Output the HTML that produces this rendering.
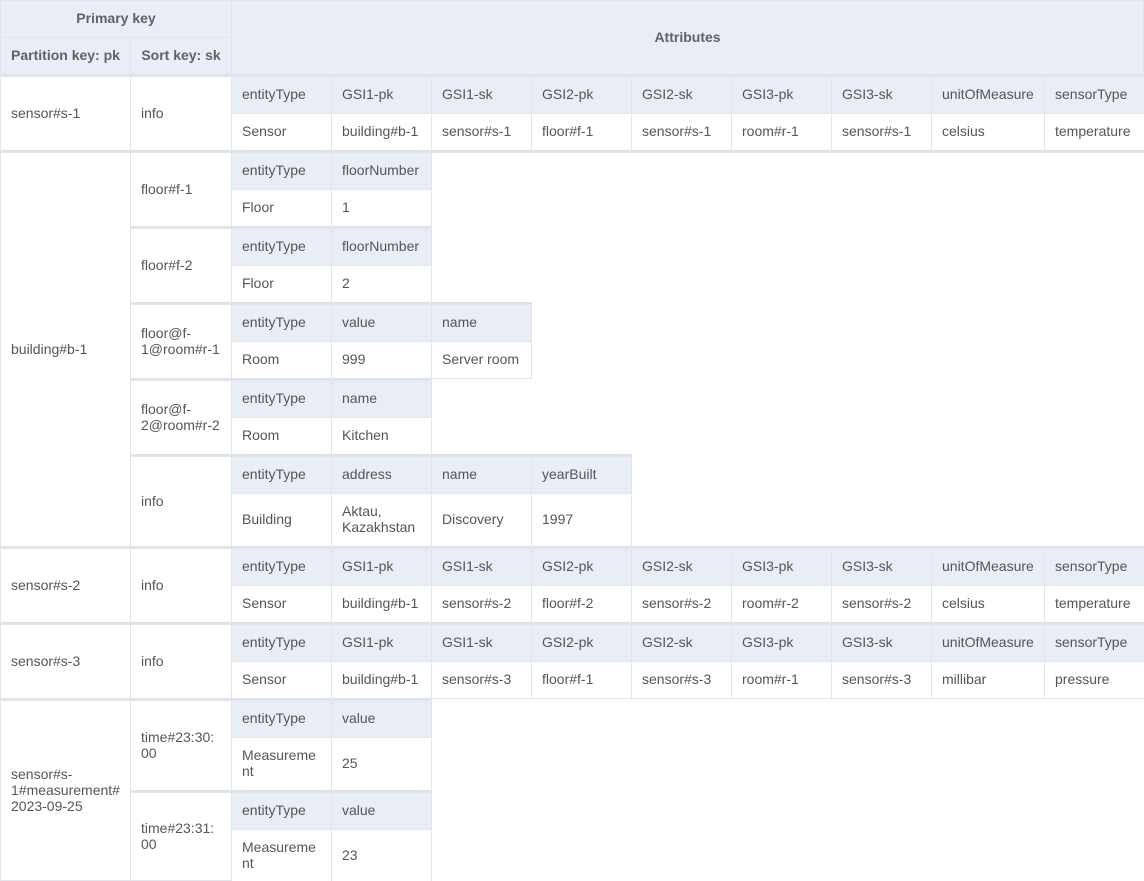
<!DOCTYPE html>
<html><head><meta charset="utf-8"><style>
html,body{margin:0;padding:0;background:#fff;width:1144px;height:881px;overflow:hidden;position:relative;font-family:"Liberation Sans",sans-serif;font-size:14px;color:#555;}
.c{position:absolute;box-sizing:border-box;border:1px solid #e0e4eb;padding:0 10px 2px 10px;display:flex;align-items:center;line-height:16px;background:#fff}
.h{background:#e9edf5}
.b{font-weight:bold;color:#5f6368;justify-content:center}
.s{position:absolute;background:#dfe3ea;height:3px}
</style></head><body>
<div class="c h b" style="left:0;top:0;width:232px;height:38px">Primary key</div>
<div class="c h b" style="left:0;top:37px;width:131px;height:38px">Partition key: pk</div>
<div class="c h b" style="left:130px;top:37px;width:102px;height:38px">Sort key: sk</div>
<div class="c h b" style="left:231px;top:0;width:913px;height:75px">Attributes</div>
<div class="s" style="left:0;top:74px;width:1144px"></div>

<div class="c" style="left:0;top:76px;width:131px;height:75px">sensor#s-1</div>
<div class="c" style="left:130px;top:76px;width:102px;height:75px">info</div>
<div class="c h" style="left:231px;top:76px;width:101px;height:38px">entityType</div>
<div class="c h" style="left:331px;top:76px;width:101px;height:38px">GSI1-pk</div>
<div class="c h" style="left:431px;top:76px;width:101px;height:38px">GSI1-sk</div>
<div class="c h" style="left:531px;top:76px;width:101px;height:38px">GSI2-pk</div>
<div class="c h" style="left:631px;top:76px;width:101px;height:38px">GSI2-sk</div>
<div class="c h" style="left:731px;top:76px;width:101px;height:38px">GSI3-pk</div>
<div class="c h" style="left:831px;top:76px;width:101px;height:38px">GSI3-sk</div>
<div class="c h" style="left:931px;top:76px;width:114px;height:38px">unitOfMeasure</div>
<div class="c h" style="left:1044px;top:76px;width:102px;height:38px">sensorType</div>
<div class="c" style="left:231px;top:113px;width:101px;height:38px">Sensor</div>
<div class="c" style="left:331px;top:113px;width:101px;height:38px">building#b-1</div>
<div class="c" style="left:431px;top:113px;width:101px;height:38px">sensor#s-1</div>
<div class="c" style="left:531px;top:113px;width:101px;height:38px">floor#f-1</div>
<div class="c" style="left:631px;top:113px;width:101px;height:38px">sensor#s-1</div>
<div class="c" style="left:731px;top:113px;width:101px;height:38px">room#r-1</div>
<div class="c" style="left:831px;top:113px;width:101px;height:38px">sensor#s-1</div>
<div class="c" style="left:931px;top:113px;width:114px;height:38px">celsius</div>
<div class="c" style="left:1044px;top:113px;width:102px;height:38px">temperature</div>
<div class="s" style="left:0;top:150px;width:1144px"></div>

<div class="c" style="left:0;top:152px;width:131px;height:395px">building#b-1</div>
<div class="c" style="left:130px;top:152px;width:102px;height:75px">floor#f-1</div>
<div class="c h" style="left:231px;top:152px;width:101px;height:38px">entityType</div>
<div class="c h" style="left:331px;top:152px;width:101px;height:38px">floorNumber</div>
<div class="c" style="left:231px;top:189px;width:101px;height:38px">Floor</div>
<div class="c" style="left:331px;top:189px;width:101px;height:38px">1</div>
<div class="s" style="left:130px;top:226px;width:302px"></div>

<div class="c" style="left:130px;top:228px;width:102px;height:75px">floor#f-2</div>
<div class="c h" style="left:231px;top:228px;width:101px;height:38px">entityType</div>
<div class="c h" style="left:331px;top:228px;width:101px;height:38px">floorNumber</div>
<div class="c" style="left:231px;top:265px;width:101px;height:38px">Floor</div>
<div class="c" style="left:331px;top:265px;width:101px;height:38px">2</div>
<div class="s" style="left:130px;top:302px;width:402px"></div>

<div class="c" style="left:130px;top:304px;width:102px;height:75px">floor@f-<br>1@room#r-1</div>
<div class="c h" style="left:231px;top:304px;width:101px;height:38px">entityType</div>
<div class="c h" style="left:331px;top:304px;width:101px;height:38px">value</div>
<div class="c h" style="left:431px;top:304px;width:101px;height:38px">name</div>
<div class="c" style="left:231px;top:341px;width:101px;height:38px">Room</div>
<div class="c" style="left:331px;top:341px;width:101px;height:38px">999</div>
<div class="c" style="left:431px;top:341px;width:101px;height:38px">Server room</div>
<div class="s" style="left:130px;top:378px;width:302px"></div>

<div class="c" style="left:130px;top:380px;width:102px;height:75px">floor@f-<br>2@room#r-2</div>
<div class="c h" style="left:231px;top:380px;width:101px;height:38px">entityType</div>
<div class="c h" style="left:331px;top:380px;width:101px;height:38px">name</div>
<div class="c" style="left:231px;top:417px;width:101px;height:38px">Room</div>
<div class="c" style="left:331px;top:417px;width:101px;height:38px">Kitchen</div>
<div class="s" style="left:130px;top:454px;width:502px"></div>

<div class="c" style="left:130px;top:456px;width:102px;height:91px">info</div>
<div class="c h" style="left:231px;top:456px;width:101px;height:38px">entityType</div>
<div class="c h" style="left:331px;top:456px;width:101px;height:38px">address</div>
<div class="c h" style="left:431px;top:456px;width:101px;height:38px">name</div>
<div class="c h" style="left:531px;top:456px;width:101px;height:38px">yearBuilt</div>
<div class="c" style="left:231px;top:493px;width:101px;height:54px">Building</div>
<div class="c" style="left:331px;top:493px;width:101px;height:54px">Aktau,<br>Kazakhstan</div>
<div class="c" style="left:431px;top:493px;width:101px;height:54px">Discovery</div>
<div class="c" style="left:531px;top:493px;width:101px;height:54px">1997</div>
<div class="s" style="left:0;top:546px;width:1144px"></div>

<div class="c" style="left:0;top:548px;width:131px;height:75px">sensor#s-2</div>
<div class="c" style="left:130px;top:548px;width:102px;height:75px">info</div>
<div class="c h" style="left:231px;top:548px;width:101px;height:38px">entityType</div>
<div class="c h" style="left:331px;top:548px;width:101px;height:38px">GSI1-pk</div>
<div class="c h" style="left:431px;top:548px;width:101px;height:38px">GSI1-sk</div>
<div class="c h" style="left:531px;top:548px;width:101px;height:38px">GSI2-pk</div>
<div class="c h" style="left:631px;top:548px;width:101px;height:38px">GSI2-sk</div>
<div class="c h" style="left:731px;top:548px;width:101px;height:38px">GSI3-pk</div>
<div class="c h" style="left:831px;top:548px;width:101px;height:38px">GSI3-sk</div>
<div class="c h" style="left:931px;top:548px;width:114px;height:38px">unitOfMeasure</div>
<div class="c h" style="left:1044px;top:548px;width:102px;height:38px">sensorType</div>
<div class="c" style="left:231px;top:585px;width:101px;height:38px">Sensor</div>
<div class="c" style="left:331px;top:585px;width:101px;height:38px">building#b-1</div>
<div class="c" style="left:431px;top:585px;width:101px;height:38px">sensor#s-2</div>
<div class="c" style="left:531px;top:585px;width:101px;height:38px">floor#f-2</div>
<div class="c" style="left:631px;top:585px;width:101px;height:38px">sensor#s-2</div>
<div class="c" style="left:731px;top:585px;width:101px;height:38px">room#r-2</div>
<div class="c" style="left:831px;top:585px;width:101px;height:38px">sensor#s-2</div>
<div class="c" style="left:931px;top:585px;width:114px;height:38px">celsius</div>
<div class="c" style="left:1044px;top:585px;width:102px;height:38px">temperature</div>
<div class="s" style="left:0;top:622px;width:1144px"></div>

<div class="c" style="left:0;top:624px;width:131px;height:75px">sensor#s-3</div>
<div class="c" style="left:130px;top:624px;width:102px;height:75px">info</div>
<div class="c h" style="left:231px;top:624px;width:101px;height:38px">entityType</div>
<div class="c h" style="left:331px;top:624px;width:101px;height:38px">GSI1-pk</div>
<div class="c h" style="left:431px;top:624px;width:101px;height:38px">GSI1-sk</div>
<div class="c h" style="left:531px;top:624px;width:101px;height:38px">GSI2-pk</div>
<div class="c h" style="left:631px;top:624px;width:101px;height:38px">GSI2-sk</div>
<div class="c h" style="left:731px;top:624px;width:101px;height:38px">GSI3-pk</div>
<div class="c h" style="left:831px;top:624px;width:101px;height:38px">GSI3-sk</div>
<div class="c h" style="left:931px;top:624px;width:114px;height:38px">unitOfMeasure</div>
<div class="c h" style="left:1044px;top:624px;width:102px;height:38px">sensorType</div>
<div class="c" style="left:231px;top:661px;width:101px;height:38px">Sensor</div>
<div class="c" style="left:331px;top:661px;width:101px;height:38px">building#b-1</div>
<div class="c" style="left:431px;top:661px;width:101px;height:38px">sensor#s-3</div>
<div class="c" style="left:531px;top:661px;width:101px;height:38px">floor#f-1</div>
<div class="c" style="left:631px;top:661px;width:101px;height:38px">sensor#s-3</div>
<div class="c" style="left:731px;top:661px;width:101px;height:38px">room#r-1</div>
<div class="c" style="left:831px;top:661px;width:101px;height:38px">sensor#s-3</div>
<div class="c" style="left:931px;top:661px;width:114px;height:38px">millibar</div>
<div class="c" style="left:1044px;top:661px;width:102px;height:38px">pressure</div>
<div class="s" style="left:0;top:698px;width:432px"></div>

<div class="c" style="left:0;top:700px;width:131px;height:181px">sensor#s-<br>1#measurement#<br>2023-09-25</div>
<div class="c" style="left:130px;top:700px;width:102px;height:91px">time#23:30:<br>00</div>
<div class="c h" style="left:231px;top:700px;width:101px;height:38px">entityType</div>
<div class="c h" style="left:331px;top:700px;width:101px;height:38px">value</div>
<div class="c" style="left:231px;top:737px;width:101px;height:54px">Measureme<br>nt</div>
<div class="c" style="left:331px;top:737px;width:101px;height:54px">25</div>
<div class="s" style="left:130px;top:790px;width:302px"></div>
<div class="c" style="left:130px;top:792px;width:102px;height:89px">time#23:31:<br>00</div>
<div class="c h" style="left:231px;top:792px;width:101px;height:38px">entityType</div>
<div class="c h" style="left:331px;top:792px;width:101px;height:38px">value</div>
<div class="c" style="left:231px;top:829px;width:101px;height:54px">Measureme<br>nt</div>
<div class="c" style="left:331px;top:829px;width:101px;height:54px">23</div>
</body></html>
